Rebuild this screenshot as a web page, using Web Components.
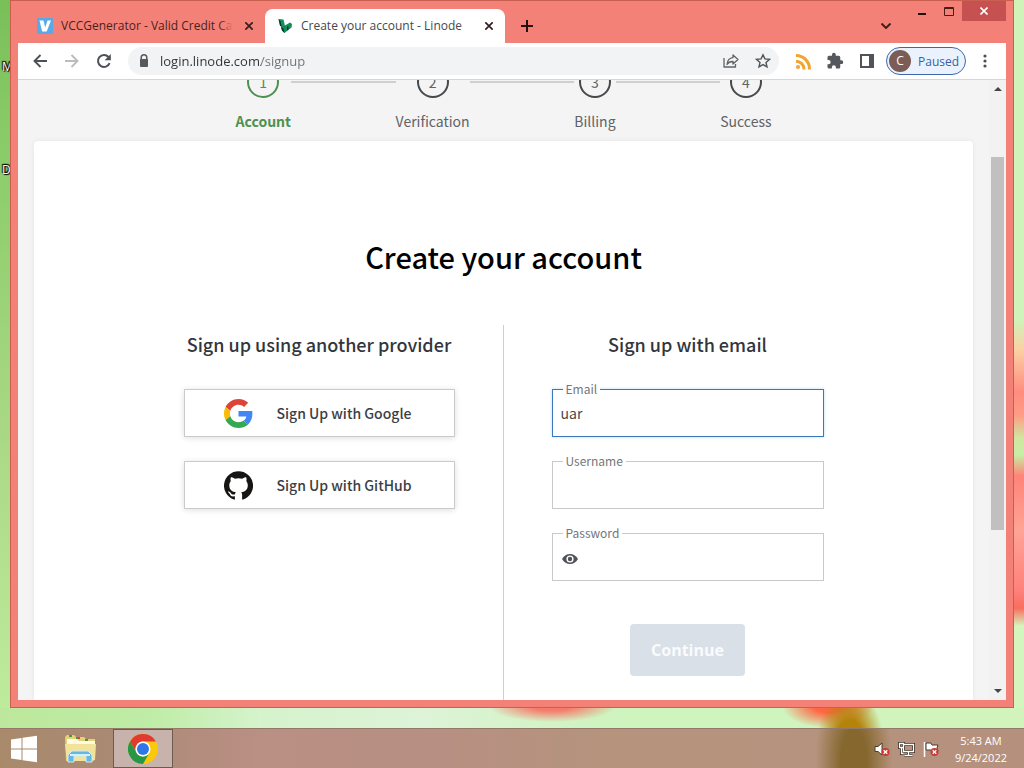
<!DOCTYPE html>
<html lang="en">
<head>
<meta charset="utf-8">
<meta name="viewport" content="width=device-width, initial-scale=1">
<title>Create your account - Linode</title>
<style>
    body {
        margin: 0;
        --ui: "Open Sans", "Noto Sans", sans-serif;
        --page: "Noto Sans CJK SC", "Noto Sans", sans-serif;
        font-family: var(--ui);
        font-size: 12px;
    }
</style>
</head>
<body>
<desktop-screen>
    <browser-window>
        <browser-tab slot="tabs" label="VCCGenerator - Valid Credit Card">
            <svg slot="icon" width="16" height="16" viewBox="0 0 16 16"><rect width="16" height="16" rx="1" fill="#5aa9e6"/><path d="M2.5 2.5h4l1.700 7L10.500 2.500h3.500L9.700 13.500H5.200z" fill="#fff"/></svg>
        </browser-tab>
        <browser-tab slot="tabs" label="Create your account - Linode" active>
            <svg slot="icon" width="16" height="16" viewBox="0 0 16 16"><path d="M1.500 1l5 .5 1.500 6.500-2 1.500-3-2z" fill="#12935e"/><path d="M1.500 1l2 2.200L5 9.500l-2-2z" fill="#06392b"/><path d="M4 9l4-1.500 5-3 2 1.500-.5 3.500L7.500 15 5 12.500z" fill="#128a5a"/><path d="M4 9l2.500 1.500 1 4.500L5 12.500zM10 8l1.500 1v2.500L10 12.500z" fill="#06392b"/></svg>
        </browser-tab>
        <signup-page></signup-page>
    </browser-window>
    <task-bar slot="taskbar"></task-bar>
</desktop-screen>

<script>
class DesktopScreen extends HTMLElement {
    connectedCallback() {
        this.attachShadow({ mode: "open" }).innerHTML = `
            <style>
                :host {
                    display: flex;
                    flex-direction: column;
                    height: 100vh;
                    overflow: hidden;
                    background:
                        radial-gradient(ellipse 64px 16px at 552px calc(100% - 62px), #f57b6a 30%, #f57b6a00),
                        radial-gradient(ellipse 34px 62px at 850px calc(100% - 20px), #b5820a 45%, #b5820a00),
                        radial-gradient(ellipse 46px 22px at 828px calc(100% - 62px), #ff6644 30%, #ff664400),
                        linear-gradient(90deg, #bce79c, #bfeca6 150px, #d5f3cc 260px, #def3d8 420px, #cff4bf 600px, #d2f4bc) 0 100% / 100% 60px no-repeat,
                        linear-gradient(#cff3b8 320px, #fcd0a4 350px, #ff8d7f 392px, #ff9c84 415px, #d0e6a0 438px, #c8eda5 455px, #ff8378 476px, #ffa496 530px, #ff817c 590px, #f96d5d 608px, #d5f5be 626px) 100% 0 / 20px 100% no-repeat,
                        linear-gradient(#79bf58, #8acc69 150px, #abd986 450px, #bdeb9c 700px);
                }
                main {
                    flex: 1;
                    min-height: 0;
                    display: flex;
                    padding: 0 10px 20px;
                    position: relative;
                }
                span {
                    position: absolute;
                    left: 2px;
                    color: #fff;
                    text-shadow: 0 0 1px #000, 1px 1px 1px #000, -1px -1px 1px #000, 1px -1px 1px #000;
                }
                .m { top: 58px; }
                .d { top: 161px; }
                ::slotted(browser-window) { flex: 1; min-width: 0; position: relative; }
            </style>
            <main>
                <span class="m">M</span>
                <span class="d">D</span>
                <slot></slot>
            </main>
            <slot name="taskbar"></slot>
        `;
    }
}

class BrowserWindow extends HTMLElement {
    connectedCallback() {
        this.attachShadow({ mode: "open" }).innerHTML = `
            <style>
                :host {
                    display: flex;
                    flex-direction: column;
                    box-sizing: border-box;
                    padding: 0 7px 7px;
                    border: 1px solid #c9604f;
                    background: #f48177;
                }
                button {
                    border: 0;
                    padding: 0;
                    background: none;
                    display: grid;
                    place-items: center;
                    font: inherit;
                }
                header {
                    height: 42px;
                    display: flex;
                    align-items: flex-end;
                    padding-left: 7px;
                }
                .new { width: 44px; height: 34px; }
                .list { width: 32px; height: 34px; margin-left: auto; margin-right: 6px; }
                .controls { display: flex; align-self: flex-start; }
                .controls button { width: 27px; height: 20px; }
                .controls .close { width: 44px; background: #c75050; }
                nav {
                    height: 36px;
                    display: flex;
                    align-items: center;
                    padding: 0 5px 0 6px;
                    background: #fff;
                    border-bottom: 1px solid #d5d6d8;
                }
                nav button { width: 32px; height: 28px; flex: none; }
                form {
                    flex: 1;
                    min-width: 0;
                    height: 28px;
                    margin: 0 8px;
                    display: flex;
                    align-items: center;
                    border-radius: 14px;
                    background: #f1f3f4;
                }
                form svg { flex: none; }
                form > svg { margin: 0 8px; }
                input {
                    flex: 1;
                    min-width: 0;
                    border: 0;
                    padding: 0;
                    outline: 0;
                    font: 13px/20px var(--ui);
                    /* the host name is darker than the path */
                    background: linear-gradient(90deg, #303338 101px, #6d7176 101px);
                    background-clip: text;
                    -webkit-background-clip: text;
                    -webkit-text-fill-color: transparent;
                }
                nav .profile {
                    width: 80px;
                    margin: 0 3px;
                    box-sizing: border-box;
                    display: flex;
                    align-items: center;
                    gap: 7px;
                    padding: 0 2px;
                    border: 1px solid #3c67ad;
                    border-radius: 14px;
                    background: #eaf2fd;
                    color: #3a5ea9;
                }
                .avatar {
                    width: 22px;
                    line-height: 22px;
                    border-radius: 50%;
                    background: #7b5d55;
                    color: #fff;
                    text-align: center;
                }
                ::slotted(signup-page) { flex: 1; min-height: 0; }
            </style>
            <header>
                <slot name="tabs"></slot>
                <button class="new" aria-label="New tab"><svg width="12" height="12" viewBox="0 0 12 12" stroke="#24100e" stroke-width="2"><path d="M6 0v12M0 6h12"/></svg></button>
                <button class="list" aria-label="Search tabs"><svg width="10" height="6" viewBox="0 0 10 6" fill="none" stroke="#4a1c18" stroke-width="2"><path d="M.5.5L5 5 9.500.5"/></svg></button>
                <div class="controls">
                    <button aria-label="Minimize"><svg width="10" height="10" viewBox="0 0 10 10"><path d="M1 7h8v2H1z" fill="#24100e"/></svg></button>
                    <button aria-label="Maximize"><svg width="10" height="9" viewBox="0 0 10 9" fill="none" stroke="#4a1c18"><path d="M.5.5h9v8h-9zM0 1.500h10"/></svg></button>
                    <button class="close" aria-label="Close"><svg width="8" height="8" viewBox="0 0 8 8" stroke="#fff" stroke-width="1.600"><path d="M.5.5l7 7m0-7l-7 7"/></svg></button>
                </div>
            </header>
            <nav>
                <button aria-label="Back"><svg width="14" height="14" viewBox="0 0 14 14" fill="none" stroke="#4d5156" stroke-width="1.900"><path d="M14 7H1.500M7.500 1L1.500 7l6 6"/></svg></button>
                <button aria-label="Forward"><svg width="14" height="14" viewBox="0 0 14 14" fill="none" stroke="#bbbcbe" stroke-width="1.900"><path d="M0 7h12.500M6.500 1l6 6-6 6"/></svg></button>
                <button aria-label="Reload"><svg width="16" height="16" viewBox="0 0 16 16"><path d="M13.600 10.200A6 6 0 1 1 12.500 4" fill="none" stroke="#4d5156" stroke-width="2"/><path d="M14.800 1v6.200H8.600z" fill="#4d5156"/></svg></button>
                <form>
                    <svg width="16" height="16" viewBox="0 0 16 16"><path d="M5.200 7V4.600a2.800 2.800 0 0 1 5.600 0V7" fill="none" stroke="#55585c" stroke-width="1.500"/><rect x="4" y="6" width="8" height="8" rx="1" fill="#55585c"/></svg>
                    <input type="text" aria-label="Address" value="login.linode.com/signup">
                    <button type="button" aria-label="Share"><svg width="16" height="16" viewBox="0 0 16 16" fill="none" stroke="#5f6368" stroke-width="1.300" stroke-linejoin="round"><path d="M1 5v9h11.500v-3"/><path d="M10 2l5 4.500-5 4.500V8.500C7 8.300 5.300 9.500 4 11.500 4.300 7.500 6.500 5 10 4.600z"/></svg></button>
                    <button type="button" aria-label="Bookmark"><svg width="16" height="16" viewBox="0 0 16 16" fill="none" stroke="#505458" stroke-width="1.400"><path d="M8 1.800l1.900 4.100 4.500.5-3.400 3 1 4.500L8 11.600l-4 2.300 1-4.500-3.400-3 4.500-.5z"/></svg></button>
                </form>
                <button aria-label="RSS"><svg width="17" height="17" viewBox="0 0 17 17" fill="none" stroke="#f3a42e" stroke-width="3"><path d="M1 2.500A13.500 13.500 0 0 1 14.500 16.500M1 8.200A8 8 0 0 1 9 16.500"/><circle cx="3" cy="14" r="2.100" fill="#f0a44a" stroke="none"/></svg></button>
                <button aria-label="Extensions"><svg width="18" height="18" viewBox="0 0 24 24" fill="#54575b"><path d="M20.500 11H19V7a2 2 0 0 0-2-2h-4V3.500a2.500 2.500 0 0 0-5 0V5H4a2 2 0 0 0-2 2v3.800h1.500a2.700 2.700 0 0 1 0 5.400H2V20a2 2 0 0 0 2 2h3.800v-1.500a2.700 2.700 0 0 1 5.400 0V22H17a2 2 0 0 0 2-2v-4h1.500a2.500 2.500 0 0 0 0-5z"/></svg></button>
                <button aria-label="Side panel"><svg width="14" height="14" viewBox="0 0 14 14"><rect x="1" y="1" width="12" height="12" fill="none" stroke="#505357" stroke-width="2"/><path d="M9 1h4v12H9z" fill="#505357"/></svg></button>
                <button class="profile"><span class="avatar">C</span>Paused</button>
                <button aria-label="Menu"><svg width="4" height="14" viewBox="0 0 4 14" fill="#4d5156"><circle cx="2" cy="2" r="1.600"/><circle cx="2" cy="7" r="1.600"/><circle cx="2" cy="12" r="1.600"/></svg></button>
            </nav>
            <slot></slot>
        `;
    }
}

class BrowserTab extends HTMLElement {
    connectedCallback() {
        this.attachShadow({ mode: "open" }).innerHTML = `
            <style>
                :host {
                    display: flex;
                    align-items: center;
                    gap: 8px;
                    box-sizing: border-box;
                    width: 240px;
                    height: 34px;
                    padding: 0 8px 0 12px;
                    color: #4d1f1b;
                    --fade: #f48177;
                }
                :host([active]) {
                    background: #fff;
                    color: #45484c;
                    border-radius: 8px 8px 0 0;
                    --fade: #fff;
                }
                span {
                    flex: 1;
                    min-width: 0;
                    overflow: hidden;
                    white-space: nowrap;
                    line-height: 20px;
                    position: relative;
                }
                span::after {
                    content: "";
                    position: absolute;
                    inset: 0 0 0 auto;
                    width: 14px;
                    background: linear-gradient(90deg, transparent, var(--fade));
                }
                button { border: 0; padding: 0; background: none; width: 16px; height: 16px; display: grid; place-items: center; }
            </style>
            <slot name="icon"></slot>
            <span>${this.getAttribute("label")}</span>
            <button aria-label="Close tab"><svg width="8" height="8" viewBox="0 0 8 8" stroke="#33201e" stroke-width="1.700"><path d="M.3.3l7.400 7.400m0-7.400L.3 7.700"/></svg></button>
        `;
    }
}

class SignupPage extends HTMLElement {
    connectedCallback() {
        this.attachShadow({ mode: "open" }).innerHTML = `
            <style>
                :host {
                    display: flex;
                    background: #f4f4f4;
                    color: #32363c;
                    font-family: var(--page);
                }
                .view {
                    flex: 1;
                    min-width: 0;
                    overflow: hidden;
                    display: flex;
                    flex-direction: column;
                }
                /* scrolled down, so the top of the circles is cut off */
                .steps {
                    height: 61px;
                    flex: none;
                    overflow: hidden;
                    display: flex;
                    align-items: flex-end;
                    justify-content: center;
                }
                .steps div {
                    width: 536px;
                    display: flex;
                    align-items: flex-start;
                }
                i { flex: 1; height: 2px; margin-top: 15px; background: #cfcfcf; }
                .card {
                    flex: 1;
                    margin: 0 16px;
                    background: #fff;
                    border-radius: 4px 4px 0 0;
                    box-shadow: 0 0 4px #e4e4e8;
                    display: flex;
                    flex-direction: column;
                    align-items: center;
                }
                h1 {
                    margin: 94px 0 48px;
                    font-size: 29px;
                    line-height: 42px;
                    font-weight: 500;
                    color: #000;
                }
                .columns {
                    flex: 1;
                    display: grid;
                    grid-template-columns: 1fr 1fr;
                    width: 100%;
                    max-width: 640px;
                }
                section { display: flex; flex-direction: column; gap: 24px; }
                section:first-child { padding-right: 48px; border-right: 1px solid #cfcfcf; }
                section:last-child { padding-left: 48px; }
                h2 {
                    margin: 6px 0 8px;
                    line-height: 26px;
                    font-size: 18px;
                    font-weight: 500;
                    text-align: center;
                }
                .submit {
                    align-self: center;
                    margin-top: 19px;
                    border: 0;
                    border-radius: 4px;
                    padding: 0 21px;
                    font: bold 16px/52px var(--ui);
                    color: #fafbfc;
                    background: #d9e0e7;
                }
                aside {
                    width: 13px;
                    padding: 0 2px;
                    display: flex;
                    flex-direction: column;
                    align-items: center;
                    background: #f2f2f3;
                }
                aside svg { height: 17px; flex: none; }
                aside b { width: 100%; flex: 373; background: #c2bfc1; margin-top: 60px; }
                .rest { flex: 153; }
            </style>
            <div class="view">
                <div class="steps"><div>
                    <step-item number="1" active>Account</step-item><i></i>
                    <step-item number="2">Verification</step-item><i></i>
                    <step-item number="3">Billing</step-item><i></i>
                    <step-item number="4">Success</step-item>
                </div></div>
                <div class="card">
                    <h1>Create your account</h1>
                    <div class="columns">
                        <section>
                            <h2>Sign up using another provider</h2>
                            <provider-button name="Google">
                                <svg width="29" height="29" viewBox="0 0 48 48"><path fill="#DB4437" d="M24 9.500c3.540 0 6.710 1.220 9.210 3.600l6.850-6.850C35.900 2.380 30.470 0 24 0 14.620 0 6.510 5.380 2.560 13.220l7.980 6.190C12.430 13.720 17.740 9.500 24 9.500z"/><path fill="#4285F4" d="M46.980 24.550c0-1.570-.15-3.090-.38-4.550H24v9.020h12.940c-.58 2.960-2.260 5.480-4.780 7.180l7.730 6c4.510-4.180 7.090-10.360 7.090-17.650z"/><path fill="#FBBC05" d="M10.530 28.590c-.48-1.450-.76-2.990-.76-4.590s.27-3.140.76-4.590l-7.980-6.190C.92 16.460 0 20.120 0 24c0 3.880.92 7.540 2.560 10.780l7.970-6.190z"/><path fill="#34A853" d="M24 48c6.480 0 11.930-2.130 15.890-5.810l-7.730-6c-2.150 1.450-4.920 2.300-8.160 2.300-6.260 0-11.570-4.220-13.470-9.910l-7.980 6.190C6.510 42.620 14.620 48 24 48z"/></svg>
                            </provider-button>
                            <provider-button name="GitHub">
                                <svg width="29" height="29" viewBox="0 0 16 16"><path fill="#161514" d="M8 .2a8 8 0 0 0-2.530 15.590c.4.070.55-.17.55-.38 0-.19-.010-.820-.010-1.490-2.010.37-2.530-.49-2.690-.94-.090-.23-.480-.940-.820-1.130-.28-.15-.680-.520-.010-.530.630-.010 1.080.580 1.230.820.720 1.210 1.870.870 2.330.660.070-.520.280-.870.510-1.070-1.780-.2-3.640-.890-3.640-3.950 0-.870.310-1.590.820-2.150-.080-.2-.360-1.020.080-2.120 0 0 .670-.210 2.200.820a7.500 7.500 0 0 1 4 0c1.530-1.040 2.200-.820 2.200-.820.440 1.100.160 1.920.080 2.120.510.560.820 1.270.820 2.150 0 3.070-1.870 3.750-3.650 3.950.290.250.540.730.540 1.480 0 1.070-.010 1.930-.010 2.200 0 .210.150.460.550.380A8 8 0 0 0 8 .2z"/></svg>
                            </provider-button>
                        </section>
                        <section>
                            <h2>Sign up with email</h2>
                            <text-field label="Email" type="text" value="uar" active></text-field>
                            <text-field label="Username" type="text"></text-field>
                            <text-field label="Password" type="password"></text-field>
                            <button class="submit" disabled>Continue</button>
                        </section>
                    </div>
                </div>
            </div>
            <aside aria-hidden="true">
                <svg width="8" viewBox="0 0 8 17"><path d="M0 11l4-4 4 4z" fill="#454548"/></svg>
                <b></b>
                <div class="rest"></div>
                <svg width="8" viewBox="0 0 8 17"><path d="M0 6l4 4 4-4z" fill="#454548"/></svg>
            </aside>
        `;
    }
}

class StepItem extends HTMLElement {
    connectedCallback() {
        this.attachShadow({ mode: "open" }).innerHTML = `
            <style>
                :host {
                    display: flex;
                    flex-direction: column;
                    align-items: center;
                    gap: 12px;
                    padding-bottom: 9px;
                    font-size: 14px;
                    line-height: 22px;
                    color: #606266;
                }
                :host([active]) { color: #4c9150; font-weight: bold; }
                div {
                    box-sizing: border-box;
                    width: 32px;
                    height: 32px;
                    line-height: 28px;
                    border: 2px solid #47494d;
                    border-radius: 50%;
                    text-align: center;
                    font-weight: normal;
                }
                :host([active]) div { border-color: #4c9150; }
            </style>
            <div>${this.getAttribute("number")}</div>
            <slot></slot>
        `;
    }
}

class ProviderButton extends HTMLElement {
    connectedCallback() {
        this.attachShadow({ mode: "open" }).innerHTML = `
            <style>
                :host { display: block; }
                button {
                    box-sizing: border-box;
                    width: 100%;
                    height: 48px;
                    padding: 0 39px;
                    display: flex;
                    align-items: center;
                    gap: 24px;
                    border: 1px solid #c9cacb;
                    background: #fff;
                    box-shadow: 0 1px 6px #dedede;
                    font: 500 14px/20px var(--page);
                    color: #3b3e43;
                }
                ::slotted(svg) { display: block; }
            </style>
            <button><slot></slot><span>Sign Up with ${this.getAttribute("name")}</span></button>
        `;
    }
}

class TextField extends HTMLElement {
    connectedCallback() {
        let type = this.getAttribute("type");
        let eye = `
            <button aria-label="Show password"><svg width="16" height="16" viewBox="0 0 16 16"><path d="M0 8C2 4.500 4.800 3 8 3s6 1.500 8 5c-2 3.500-4.800 5-8 5S2 11.500 0 8z" fill="#505357"/><circle cx="8" cy="8" r="3.600" fill="#fff"/><circle cx="8" cy="8" r="2.200" fill="#505357"/></svg></button>
        `;
        this.attachShadow({ mode: "open" }).innerHTML = `
            <style>
                :host {
                    box-sizing: border-box;
                    height: 48px;
                    display: flex;
                    align-items: center;
                    position: relative;
                    padding: 0 8px;
                    border: 1px solid #c8c9c9;
                }
                :host([active]) { border-color: #3b78b8; box-shadow: 0 0 3px #b9dcf8; }
                /* sits on the top border, like a legend */
                label {
                    position: absolute;
                    left: 10px;
                    top: -11px;
                    padding: 0 3px;
                    background: #fff;
                    font-size: 12px;
                    line-height: 20px;
                    color: #74767a;
                }
                input {
                    flex: 1;
                    min-width: 0;
                    border: 0;
                    padding: 0;
                    outline: 0;
                    background: none;
                    font: 14px/20px var(--page);
                    color: #45484c;
                }
                button { border: 0; padding: 4px 8px 0 1px; background: none; display: flex; }
            </style>
            <label for="field">${this.getAttribute("label")}</label>
            ${type === "password" ? eye : ""}
            <input id="field" type="${type}" value="${this.getAttribute("value") ?? ""}">
        `;
    }
}

class TaskBar extends HTMLElement {
    connectedCallback() {
        this.attachShadow({ mode: "open" }).innerHTML = `
            <style>
                :host {
                    display: flex;
                    align-items: center;
                    box-sizing: border-box;
                    height: 40px;
                    padding-right: 17px;
                    border-top: 1px solid #92796a;
                    color: #fff;
                    background:
                        radial-gradient(ellipse 38px 90px at 854px 80%, #86682f 35%, #86682f00),
                        linear-gradient(90deg, #a88a6b, #ab8974 120px, #ba8f84 260px, #b88f83 420px, #b5937d 600px, #b5937e 780px, #b5917d);
                }
                button { border: 0; padding: 0; height: 39px; background: none; display: grid; place-items: center; }
                .start { width: 48px; }
                .files { width: 65px; }
                .chrome { width: 60px; background: #c7b3ab; border: 1px solid #f0e9e4; outline: 1px solid #6d5b50; outline-offset: -1px; }
                .tray { margin-left: auto; display: flex; gap: 8px; }
                time { margin-left: 16px; font-size: 11px; line-height: 17px; text-align: center; }
            </style>
            <button class="start" aria-label="Start"><svg width="28" height="28" viewBox="0 0 28 28" fill="#fff"><path d="M1 4.500l10.500-1.600v10.600H1zM12.500 2.700L27 .8v12.700H12.500zM1 14.500h10.500v10.600L1 23.500zM12.500 14.500H27v12.700l-14.500-1.900z"/></svg></button>
            <button class="files" aria-label="File Explorer"><svg width="34" height="30" viewBox="0 0 34 30"><path d="M1 3l2-2h7l2 2h8l2 2h9v20l-3 2H2z" fill="#e5cf77"/><path d="M3 5h10l2 2h16v5H3z" fill="#fffbe0"/><path d="M1 10h31l-1 16-3 1H3z" fill="#f2e29a"/><path d="M5 2h3M12 4h3M21 6h3" stroke="#3a9c4e" stroke-width="2"/><path d="M14 4h2" stroke="#d64a35" stroke-width="2"/><path d="M4 28V21l4-4h16l4 4v7h-6v-6H10v6z" fill="#65b7e4" stroke="#cdeafa"/><path d="M6 21h20" stroke="#d6f0fb" stroke-width="2"/></svg></button>
            <button class="chrome" aria-label="Chrome"><svg width="30" height="30" viewBox="0 0 30 30"><circle cx="15" cy="15" r="15" fill="#fcc80a"/><path d="M2 7.500A15 15 0 0 1 28 7.500H15a7.500 7.500 0 0 0-6.500 11.300z" fill="#e13a2f"/><path d="M2 7.500A15 15 0 0 0 15 30l6.500-11.300a7.500 7.500 0 0 1-13 0z" fill="#269647"/><circle cx="15" cy="15" r="7.500" fill="#fff"/><circle cx="15" cy="15" r="6" fill="#3076e8"/></svg></button>
            <div class="tray">
                <svg width="16" height="16" viewBox="0 0 16 16"><path d="M1 5.500h3L8 2v12l-4-3.500H1z" fill="#fff" stroke="#4a3b30"/><circle cx="11.500" cy="11" r="4" fill="#c93a37"/><path d="M9.700 9.200l3.600 3.600m0-3.600l-3.600 3.600" stroke="#fff" stroke-width="1.300"/></svg>
                <svg width="17" height="16" viewBox="0 0 17 16" fill="none"><path d="M5.500 3.500h10v7h-10zM10.500 11v3M6.500 14.500h8M1.500 2.500h4v4h-4zM3.500 7v5.500h2" stroke="#3c3026" stroke-width="3"/><path d="M5.500 3.500h10v7h-10zM10.500 11v3M6.500 14.500h8M1.500 2.500h4v4h-4zM3.500 7v5.500h2" stroke="#fff" stroke-width="1.300"/></svg>
                <svg width="16" height="16" viewBox="0 0 16 16"><path d="M1.500 1v15" stroke="#fff" stroke-width="1.500"/><path d="M3 2h5l1 2h6l-1 3 1 3H9L8 9H3z" fill="#fff" stroke="#4a3b30"/><circle cx="11.500" cy="11" r="4" fill="#c93a37"/><path d="M9.700 9.200l3.600 3.600m0-3.600l-3.600 3.600" stroke="#fff" stroke-width="1.300"/></svg>
            </div>
            <time>5:43 AM<br>9/24/2022</time>
        `;
    }
}

customElements.define("desktop-screen", DesktopScreen);
customElements.define("browser-window", BrowserWindow);
customElements.define("browser-tab", BrowserTab);
customElements.define("signup-page", SignupPage);
customElements.define("step-item", StepItem);
customElements.define("provider-button", ProviderButton);
customElements.define("text-field", TextField);
customElements.define("task-bar", TaskBar);
</script>
</body>
</html>
